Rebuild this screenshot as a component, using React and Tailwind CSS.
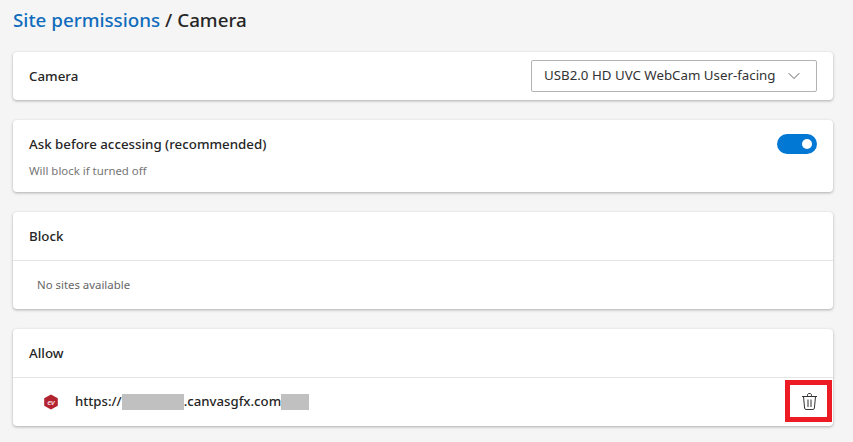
import { ChevronDown } from "lucide-react";

function App() {
  return (
    <div className="w-[853px] h-[442px] overflow-hidden bg-[#f5f5f5] pl-[13px] pr-[20px] font-['Noto_Sans',sans-serif]">
      <h1 className="h-[52px] pt-[5px] text-[18.8px] leading-[30px] font-medium text-[#262626]">
        <span className="text-[#0f6cbd]">Site permissions</span> / Camera
      </h1>

      <div className="flex flex-col gap-[20px]">
        <div className="h-[48px] flex items-center justify-between px-[16px] bg-white rounded-[4px] shadow-[0_1px_3px_rgba(0,0,0,0.3)]">
          <span className="pt-[1px] text-[13.3px] font-medium text-[#262626]">Camera</span>
          <div className="w-[286px] h-[32px] flex items-center justify-between px-[12px] border border-[#b3b3b3] rounded-[2px] text-[13.3px] text-[#333333]">
            <span>USB2.0 HD UVC WebCam User-facing</span>
            <ChevronDown size={20} strokeWidth={1.1} className="text-[#555555]" />
          </div>
        </div>

        <div className="h-[72px] flex justify-between px-[16px] pt-[14px] bg-white rounded-[4px] shadow-[0_1px_3px_rgba(0,0,0,0.3)]">
          <div>
            <div className="text-[13.3px] leading-[20px] font-medium text-[#262626]">Ask before accessing (recommended)</div>
            <div className="mt-[9px] text-[11.4px] leading-[16px] text-[#767676]">Will block if turned off</div>
          </div>
          <div className="w-[40px] h-[20px] flex items-center justify-end pr-[5px] rounded-full bg-[#0078d4]">
            <div className="w-[10px] h-[10px] rounded-full bg-white"></div>
          </div>
        </div>

        <div className="h-[97px] bg-white rounded-[4px] shadow-[0_1px_3px_rgba(0,0,0,0.3)]">
          <div className="h-[49px] flex items-center px-[16px] pt-[1px] border-b border-[#e5e5e5] text-[13.3px] font-medium text-[#262626]">Block</div>
          <div className="h-[48px] flex items-center pl-[24px] text-[11.4px] text-[#666666]">No sites available</div>
        </div>

        <div className="h-[97px] bg-white rounded-[4px] shadow-[0_1px_3px_rgba(0,0,0,0.3)]">
          <div className="h-[49px] flex items-center px-[16px] pt-[1px] border-b border-[#e5e5e5] text-[13.3px] font-medium text-[#262626]">Allow</div>
          <div className="relative h-[48px] flex items-center pl-[30px]">
            <svg width="16" height="16" viewBox="0 0 16 16">
              <polygon points="8,0.5 14.8,4.2 14.8,11.8 8,15.5 1.2,11.8 1.2,4.2" fill="#b3232f" />
              <text x="8" y="10.5" textAnchor="middle" fontSize="7.5" fontStyle="italic" fontWeight="600" fill="#f7dfe1" fontFamily="Noto Sans, sans-serif">ev</text>
            </svg>
            <div className="ml-[16px] flex items-center text-[13.2px] font-medium text-[#262626]">
              <span>https://</span>
              <span className="w-[62px] h-[16px] bg-[#c0c0c0]"></span>
              <span>.canvasgfx.com</span>
              <span className="w-[28px] h-[16px] bg-[#c0c0c0]"></span>
            </div>
            <svg className="absolute left-[789px] top-[15px]" width="15" height="17" viewBox="0 0 15 17" fill="none" stroke="#333333" strokeWidth="1">
              <path d="M0 3.5h15M1.5 3.5l1.1 11.6c.1.8.6 1.4 1.5 1.4h6.8c.9 0 1.4-.6 1.5-1.4l1.1-11.6M5.5 3.5V2.2c0-1 .6-1.7 1.4-1.7h1.2c.8 0 1.4.7 1.4 1.7v1.3M6 6.5v7.5M9 6.5v7.5" />
            </svg>
            <div className="absolute left-[772px] top-[2px] w-[47px] h-[42px] border-[5px] border-[#ed1c24]"></div>
          </div>
        </div>
      </div>
    </div>
  );
}

export default App;
